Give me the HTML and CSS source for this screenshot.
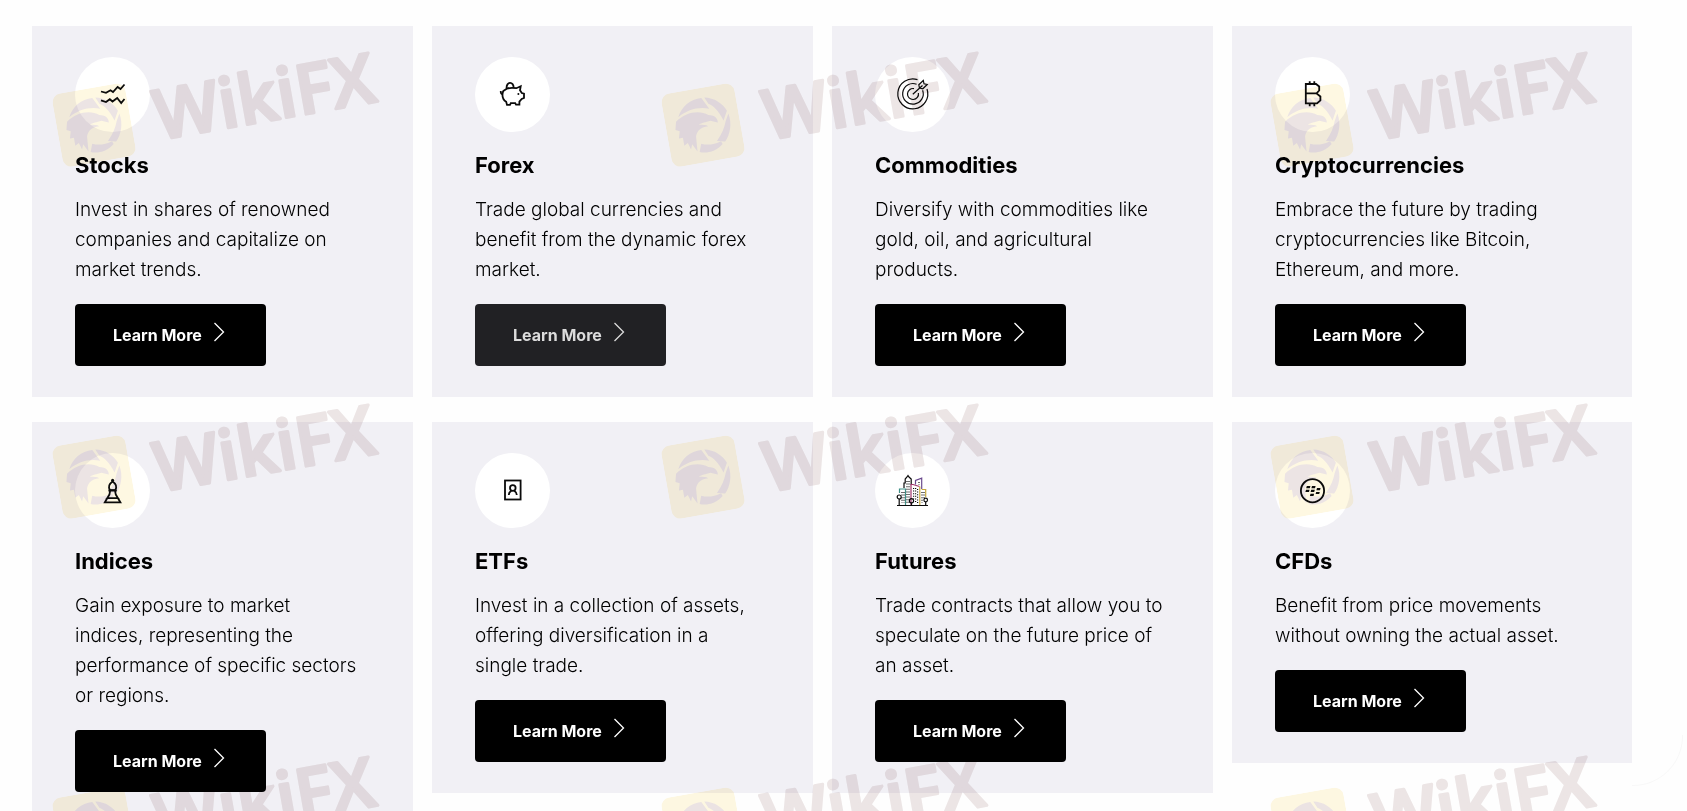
FILE: index.html
```html
<!DOCTYPE html>
<html lang="en">
<head>
    <meta charset="UTF-8">
    <meta name="viewport" content="width=device-width, initial-scale=1.0">
    <title>Instruments</title>
    <link rel="stylesheet" href="styles.css">
</head>
<body>
    <!-- Shared shapes -->
    <svg class="sprite" aria-hidden="true">
        <symbol id="chevron" viewBox="0 0 12 20">
            <path d="M1.5 1 L10.5 10 L1.5 19" fill="none" stroke="currentColor" stroke-width="1.3"/>
        </symbol>
        <symbol id="eagle" viewBox="0 0 74 74">
            <rect width="74" height="74" rx="9" fill="#fef8e2"/>
            <path fill="#ece4e4" d="M14 25 C19 15 29 9 40 10 L46 22 C36 18 24 19 14 25 Z"/>
            <path fill="#ece4e4" d="M43 10 C53 12 60 19 63 27 L58 36 C55 26 50 19 46 17 Z"/>
            <path fill="#ece4e4" d="M64 30 C66 41 62 51 56 57 L48 55 C54 49 58 43 60 37 Z"/>
            <path fill="#ece4e4" d="M53 59 C46 65 36 66 29 63 L32 55 C38 58 45 58 52 56 Z"/>
            <path fill="#ece4e4" d="M11 29 C22 21 36 21 44 28 C49 29 53 32 52 37 L45 34 C40 35 36 34 33 36 C37 37 40 37 42 39 C34 38 28 43 28 49 L27 62 L23 54 L21 59 L19 52 L15 54 L15 46 L11 46 L13 39 L9 37 Z"/>
        </symbol>
    </svg>

    <main class="instruments">
        <div class="cards">
            <article class="card">
                <div class="card-icon">
                    <svg viewBox="0 0 32 32" aria-hidden="true">
                        <path d="M4 12.5 L9 13.8 L13.5 11.3 L16 13 L20.6 8 L23.5 10 L27.5 5.5"/>
                        <path d="M4 21.3 L9 23 L12.8 20.2 L15.5 22.5 L20.2 19 L24.2 24 L27.5 20"/>
                    </svg>
                </div>
                <h2>Stocks</h2>
                <p>Invest in shares of renowned companies and capitalize on market trends.</p>
                <a href="#stocks" class="btn">Learn More <svg class="chevron" aria-hidden="true"><use href="#chevron"/></svg></a>
            </article>

            <article class="card">
                <div class="card-icon">
                    <svg viewBox="0 0 32 32" aria-hidden="true">
                        <path d="M6.3 12 L9.7 9.7 C12 8.8 16 8.8 19.4 9.2 L23.7 7.2 L23 11.3 L24.8 14 L27 14.7 V19 L24.7 20 L22.4 22.7 V25.7 H19 L18.2 24.2 H13.8 L13 25.9 H10 L9.2 22.8 C6.5 21 5.3 18.5 5.5 15.5 C5.5 14 5.8 13 6.3 12 Z"/>
                        <path d="M9.6 9.5 C9 2.2 17 2.2 16.6 8.9 M5.6 15.2 C4 15 3.6 13.8 3.8 12"/>
                        <circle class="solid" cx="21.4" cy="15" r="1"/>
                    </svg>
                </div>
                <h2>Forex</h2>
                <p>Trade global currencies and benefit from the dynamic forex market.</p>
                <a href="#forex" class="btn btn-active">Learn More <svg class="chevron" aria-hidden="true"><use href="#chevron"/></svg></a>
            </article>

            <article class="card">
                <div class="card-icon">
                    <svg class="thin" viewBox="0 0 32 32" aria-hidden="true">
                        <path d="M20.5 0.6 A15 15 0 1 0 30 10"/>
                        <path d="M19.6 5.2 A10.3 10.3 0 1 0 25.6 11.2"/>
                        <path d="M17 9.6 A5.5 5.5 0 1 0 21.4 14"/>
                        <path d="M15.8 15.2 L25.5 6.5 M22.5 9 L21.8 5.8 L26.3 1.5 L27 4.8 L30.2 5.5 L25.8 9.8 Z"/>
                    </svg>
                </div>
                <h2>Commodities</h2>
                <p>Diversify with commodities like gold, oil, and agricultural products.</p>
                <a href="#commodities" class="btn">Learn More <svg class="chevron" aria-hidden="true"><use href="#chevron"/></svg></a>
            </article>

            <article class="card">
                <div class="card-icon">
                    <svg viewBox="0 0 32 32" aria-hidden="true">
                        <path d="M8.8 5 H19 L22.2 7.5 V11.5 L19.5 14.4 L23.4 17.5 V21.3 L20 24.3 H8.8 Z M8.8 14.4 H19.5"/>
                        <path d="M12.7 2.2 V5 M17.3 2.2 V5 M12.7 24.3 V27.2 M17.3 24.3 V27.2"/>
                    </svg>
                </div>
                <h2>Cryptocurrencies</h2>
                <p>Embrace the future by trading cryptocurrencies like Bitcoin, Ethereum, and more.</p>
                <a href="#crypto" class="btn">Learn More <svg class="chevron" aria-hidden="true"><use href="#chevron"/></svg></a>
            </article>

            <article class="card">
                <div class="card-icon">
                    <svg viewBox="0 0 32 32" aria-hidden="true">
                        <path d="M15.6 6.5 C12 9 11 12 13 15.2 H18.2 C20.2 12 19.2 9 15.6 6.5 Z"/>
                        <path d="M13.2 15.5 C13.2 18.5 12 21 10.2 23.2 H21 C19.2 21 18 18.5 18 15.5 M10.2 23.2 L7.8 27.4 H23.4 L21 23.2 M11.4 15.5 H19.8"/>
                        <circle class="solid" cx="15.6" cy="5.2" r="1.5"/>
                    </svg>
                </div>
                <h2>Indices</h2>
                <p>Gain exposure to market<br> indices, representing the performance of specific sectors or regions.</p>
                <a href="#indices" class="btn">Learn More <svg class="chevron" aria-hidden="true"><use href="#chevron"/></svg></a>
            </article>

            <article class="card">
                <div class="card-icon">
                    <svg viewBox="0 0 32 32" aria-hidden="true">
                        <rect x="8" y="5.5" width="15.6" height="19"/>
                        <circle cx="15.8" cy="13" r="2.8"/>
                        <path d="M11.8 20 C11.8 17.8 13 16.6 14.4 15.7 M19.8 20 C19.8 17.8 18.6 16.6 17.2 15.7"/>
                    </svg>
                </div>
                <h2>ETFs</h2>
                <p>Invest in a collection of assets, offering diversification in a single trade.</p>
                <a href="#etfs" class="btn">Learn More <svg class="chevron" aria-hidden="true"><use href="#chevron"/></svg></a>
            </article>

            <article class="card">
                <div class="card-icon">
                    <svg class="thin" viewBox="0 0 32 32" aria-hidden="true">
                        <path d="M0 30.5 H31 M7 13 V8 H8.2 V4 L10 2 L11 0.5 L12 2 L14.2 4 V10"/>
                        <path stroke="#3f8f86" d="M2.5 18 V14 H8.5 V30"/>
                        <path stroke="#a0356c" d="M14 30 V9.5 H16 L22.5 11.5"/>
                        <path stroke="#6b4a8e" d="M18.5 9.5 V5.5 L24.7 3.2 V14"/>
                        <path stroke="#c7a83c" d="M22.8 11.5 V30 M24.7 14.5 H28.7 V22"/>
                        <path stroke-dasharray="1 1.6" d="M10 6 V28 M12 6 V28 M5 17 V28 M7 17 V28 M16.6 13 V24 M18.6 13 V28 M20.6 14 V28 M22 7 V10 M25 17 V28 M27 17 V23"/>
                        <path d="M2.2 24 V30 M14.5 28 V30 M28.7 27 V30"/>
                        <circle cx="2.2" cy="22" r="2"/>
                        <circle cx="14.5" cy="25.7" r="2.1"/>
                        <circle cx="28.7" cy="25" r="1.8"/>
                    </svg>
                </div>
                <h2>Futures</h2>
                <p>Trade contracts that allow you to speculate on the future price of an asset.</p>
                <a href="#futures" class="btn">Learn More <svg class="chevron" aria-hidden="true"><use href="#chevron"/></svg></a>
            </article>

            <article class="card">
                <div class="card-icon">
                    <svg viewBox="0 0 32 32" aria-hidden="true">
                        <circle cx="15.5" cy="15.7" r="11.6"/>
                        <path class="solid" d="M9.8 11 h3.6 l-.6 2.2 h-3.6 Z M15 11 h3.6 l-.6 2.2 h-3.6 Z M9 14.8 h3.6 l-.6 2.2 h-3.6 Z M14.2 14.8 h3.6 l-.6 2.2 h-3.6 Z M20 13 h3.6 l-.6 2.2 h-3.6 Z M19.2 16.9 h3.6 l-.6 2.2 h-3.6 Z M13.5 18.8 h3.6 l-.6 2.2 h-3.6 Z"/>
                    </svg>
                </div>
                <h2>CFDs</h2>
                <p>Benefit from price movements without owning the actual asset.</p>
                <a href="#cfds" class="btn">Learn More <svg class="chevron" aria-hidden="true"><use href="#chevron"/></svg></a>
            </article>
        </div>

        <!-- Repeated watermark above the cards -->
        <div class="watermarks" aria-hidden="true">
            <svg class="watermark"><use href="#eagle" width="74" height="74"/><text x="98" y="63">WikiFX</text></svg>
            <svg class="watermark"><use href="#eagle" width="74" height="74"/><text x="98" y="63">WikiFX</text></svg>
            <svg class="watermark"><use href="#eagle" width="74" height="74"/><text x="98" y="63">WikiFX</text></svg>
            <svg class="watermark"><use href="#eagle" width="74" height="74"/><text x="98" y="63">WikiFX</text></svg>
            <svg class="watermark"><use href="#eagle" width="74" height="74"/><text x="98" y="63">WikiFX</text></svg>
            <svg class="watermark"><use href="#eagle" width="74" height="74"/><text x="98" y="63">WikiFX</text></svg>
            <svg class="watermark"><use href="#eagle" width="74" height="74"/><text x="98" y="63">WikiFX</text></svg>
            <svg class="watermark"><use href="#eagle" width="74" height="74"/><text x="98" y="63">WikiFX</text></svg>
            <svg class="watermark"><use href="#eagle" width="74" height="74"/><text x="98" y="63">WikiFX</text></svg>
        </div>
    </main>
</body>
</html>
```
FILE: styles.css
```css
* {
    box-sizing: border-box;
}

body {
    margin: 0;
    background-color: #fefefe;
    color: #000;
    font-family: Inter, "Liberation Sans", sans-serif;
}

.sprite {
    display: none;
}

.instruments {
    position: relative;
    overflow: hidden;
    padding: 26px 55px 0 32px;
}

/* faint rounded corner beside the last card */
.instruments::after {
    content: "";
    position: absolute;
    right: 4px;
    bottom: 37px;
    width: 50px;
    height: 50px;
    border-right: 1px solid #f8f8f8;
    border-bottom: 1px solid #f8f8f8;
    border-bottom-right-radius: 50px;
}

.cards {
    display: grid;
    grid-template-columns: repeat(4, 1fr);
    row-gap: 25px;
    align-items: start;
}

.card {
    margin-right: 19px;
    padding: 31px 49px 31px 43px;
    background-color: #f1f0f5;
}

.card:nth-child(4n) {
    margin-right: 0;
}

.card-icon {
    display: flex;
    align-items: center;
    justify-content: center;
    width: 75px;
    height: 75px;
    border-radius: 50%;
    background-color: #fff;
}

.card-icon svg {
    width: 32px;
    height: 32px;
    overflow: visible;
    fill: none;
    stroke: #0b0b0b;
    stroke-width: 1.8;
}

.card-icon .thin {
    stroke-width: 1.2;
}

.card-icon .solid {
    fill: #0b0b0b;
    stroke: none;
}

.card h2 {
    margin: 18px 0 15px;
    font-size: 22px;
    font-weight: 700;
    line-height: 30px;
}

.card p {
    margin: 0 0 19px;
    font-size: 19px;
    font-weight: 300;
    line-height: 30px;
}

.btn {
    display: inline-flex;
    align-items: center;
    gap: 11px;
    height: 62px;
    padding: 0 41px 0 38px;
    border-radius: 4px;
    background-color: #000;
    color: #fff;
    font-size: 16px;
    font-weight: 700;
    text-decoration: none;
    vertical-align: top;
}

.btn:hover,
.btn-active {
    background-color: #212124;
    color: #dcdcdc;
}

.chevron {
    width: 12px;
    height: 20px;
    margin-bottom: 6px;
}

.watermarks {
    position: absolute;
    inset: 0;
    display: grid;
    grid-template-columns: repeat(3, 609px);
    grid-auto-rows: 352px;
    overflow: hidden;
    pointer-events: none;
    mix-blend-mode: multiply;
}

.watermark {
    width: 340px;
    height: 74px;
    margin: 65px 0 0 55px;
    overflow: visible;
    transform: rotate(-10deg);
}

.watermark text {
    fill: #ede6e6;
    stroke: #ede6e6;
    stroke-width: 3;
    stroke-linejoin: round;
    font-family: "Open Sans", sans-serif;
    font-size: 69px;
    font-weight: 600;
}
```
